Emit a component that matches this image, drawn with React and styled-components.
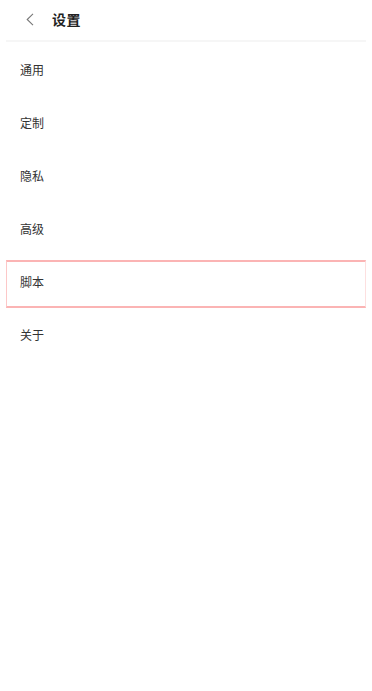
import React from "react";
import styled, { createGlobalStyle } from "styled-components";

const Global = createGlobalStyle`
  html, body { margin: 0; padding: 0; background: #fff; }
  body { font-family: "Noto Sans CJK SC", "Noto Sans", sans-serif; }
`;

const Page = styled.div`
  width: 372px;
  min-height: 691px;
  background: #fff;
  display: flex;
  flex-direction: column;
`;

const Header = styled.div`
  height: 40px;
  margin: 0 6px;
  display: flex;
  align-items: center;
  gap: 18px;
  padding-left: 19px;
  border-bottom: 2px solid #f6f6f6;
`;

const Back = styled.button`
  border: 0;
  background: none;
  padding: 0;
  width: 9px;
  height: 14px;
  display: flex;
  align-items: center;
  justify-content: center;
  margin-top: -2px;
`;

const Title = styled.h1`
  margin: 0;
  font-size: 14px;
  font-weight: 700;
  color: #222;
  letter-spacing: 0.5px;
  margin-top: -2px;
`;

const List = styled.div`
  display: flex;
  flex-direction: column;
  padding-top: 1px;
`;

const Row = styled.div`
  position: relative;
  height: 53px;
  display: flex;
  align-items: center;
  padding-left: 20px;
  font-size: 12px;
  color: #333;
  ${(p) =>
    p.$active &&
    `
    &::after {
      content: "";
      position: absolute;
      left: 6px;
      right: 6px;
      top: 5px;
      bottom: 0;
      border: 1px solid #fde0e0;
      border-top: 2px solid #fbb4b4;
      border-bottom: 2px solid #fbb4b4;
      border-left-color: #fcc8c8;
      pointer-events: none;
    }
  `}
`;

const items = ["通用", "定制", "隐私", "高级", "脚本", "关于"];

export default function App() {
  return (
    <Page>
      <Global />
      <Header>
        <Back aria-label="返回">
          <svg width="8" height="13" viewBox="0 0 8 13" fill="none">
            <path d="M7 0.8 L1.2 6.5 L7 12.2" stroke="#777" strokeWidth="1.1" />
          </svg>
        </Back>
        <Title>设置</Title>
      </Header>
      <List>
        {items.map((t) => (
          <Row key={t} $active={t === "脚本"}>
            {t}
          </Row>
        ))}
      </List>
    </Page>
  );
}
